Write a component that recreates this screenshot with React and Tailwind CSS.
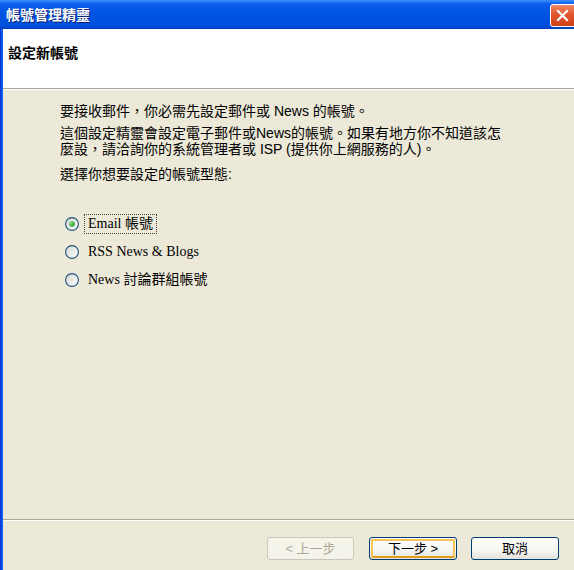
import React from 'react'

// Radio XP : cercle bleu, fond dégradé, point vert si coché
function Radio({ checked }) {
  return (
    <svg width="14" height="14" viewBox="0 0 14 14" className="shrink-0">
      <defs>
        <linearGradient id="rfill" x1="0" y1="0" x2="1" y2="1">
          <stop offset="0" stopColor="#d6d6ce" />
          <stop offset="1" stopColor="#ffffff" />
        </linearGradient>
        <radialGradient id="rdot" cx="0.35" cy="0.35" r="0.7">
          <stop offset="0" stopColor="#8de08d" />
          <stop offset="1" stopColor="#1c9a1c" />
        </radialGradient>
      </defs>
      <circle cx="7" cy="7" r="6.4" fill="url(#rfill)" stroke="#1c5180" strokeWidth="1.1" />
      {checked && <circle cx="7" cy="7" r="2.8" fill="url(#rdot)" />}
    </svg>
  )
}

function XpButton({ children, disabled, isDefault }) {
  if (disabled) {
    return (
      <div className="w-[87px] h-[23px] rounded-[3px] border border-[#c9c7ba] bg-[#f5f4ea] flex items-center justify-center text-[13px] text-[#aca899]">
        {children}
      </div>
    )
  }
  return (
    <div className="w-[88px] h-[23px] rounded-[3px] border border-[#003c74] bg-[linear-gradient(to_bottom,#ffffff_0%,#f4f4f0_60%,#e3e2da_100%)] p-[1px]">
      <div
        className={
          isDefault
            ? 'w-full h-full rounded-[2px] border-2 border-[#f7c45a] border-b-[#e59b1a] flex items-center justify-center text-[13px] text-black'
            : 'w-full h-full rounded-[2px] flex items-center justify-center text-[13px] text-black'
        }
      >
        {children}
      </div>
    </div>
  )
}

export default function App() {
  const font = { fontFamily: '"Liberation Sans", "Noto Sans CJK TC", sans-serif' }
  const serif = { fontFamily: '"Liberation Serif", "Noto Sans CJK TC", serif' }

  return (
    <div className="w-[574px] h-[570px] overflow-hidden flex flex-col bg-[#ece9d8]" style={font}>
      {/* Barre de titre */}
      <div className="h-[29px] shrink-0 flex items-center justify-between pl-[6px] overflow-hidden bg-[linear-gradient(to_bottom,#3d8dff_0%,#0a5ee8_14%,#0054e3_50%,#0050dc_86%,#0042c6_100%)]">
        <span className="text-white font-bold text-[14px] leading-none [text-shadow:1px_1px_0_#0a1e6e]">
          帳號管理精靈
        </span>
        <div className="w-[28px] h-[23px] -mr-[4px] mt-[1px] rounded-[3px] border border-white bg-[linear-gradient(to_bottom,#f08b6a_0%,#e25a32_40%,#cf3f18_100%)] flex items-center pl-[5px]">
          <svg width="13" height="13" viewBox="0 0 13 13">
            <path d="M2 2 L11 11 M11 2 L2 11" stroke="white" strokeWidth="2.2" strokeLinecap="square" />
          </svg>
        </div>
      </div>

      <div className="flex-1 flex">
        {/* Bord gauche bleu */}
        <div className="w-[3px] shrink-0 bg-[linear-gradient(to_right,#0831d9,#166aee)]" />

        <div className="flex-1 flex flex-col">
          {/* En-tête blanc */}
          <div className="h-[60px] shrink-0 bg-white pl-[5px] pt-[12px] border-b border-[#aca899]">
            <span className="font-bold text-[14px] leading-[16px] text-black">設定新帳號</span>
          </div>
          <div className="h-[1px] bg-white" />

          {/* Corps */}
          <div className="flex-1 pl-[57px] pt-[13px] text-[14px] leading-[16px] text-black">
            <p>要接收郵件，你必需先設定郵件或 News 的帳號。</p>
            <p className="mt-[6px]">
              這個設定精靈會設定電子郵件或News的帳號。如果有地方你不知道該怎
              <br />
              麼設，請洽詢你的系統管理者或 ISP (提供你上網服務的人)。
            </p>
            <p className="mt-[9px]">選擇你想要設定的帳號型態:</p>

            <div className="mt-[32px] flex flex-col gap-[8px] pl-[5px]" style={serif}>
              <div className="h-[20px] flex items-center gap-[5px]">
                <Radio checked />
                <span className="border border-dotted border-[#444] px-[3px] leading-[18px]">Email 帳號</span>
              </div>
              <div className="h-[20px] flex items-center gap-[6px]">
                <Radio />
                <span className="pl-[3px]">RSS News &amp; Blogs</span>
              </div>
              <div className="h-[20px] flex items-center gap-[6px]">
                <Radio />
                <span className="pl-[3px]">News 討論群組帳號</span>
              </div>
            </div>
          </div>

          {/* Séparateur bas */}
          <div className="h-[1px] bg-[#aca899]" />
          <div className="h-[1px] bg-white" />

          {/* Boutons */}
          <div className="h-[49px] shrink-0 flex items-start justify-end pt-[16px] pr-[15px]">
            <XpButton disabled>&lt; 上一步</XpButton>
            <div className="ml-[15px]">
              <XpButton isDefault>下一步 &gt;</XpButton>
            </div>
            <div className="ml-[14px]">
              <XpButton>取消</XpButton>
            </div>
          </div>
        </div>
      </div>
    </div>
  )
}
